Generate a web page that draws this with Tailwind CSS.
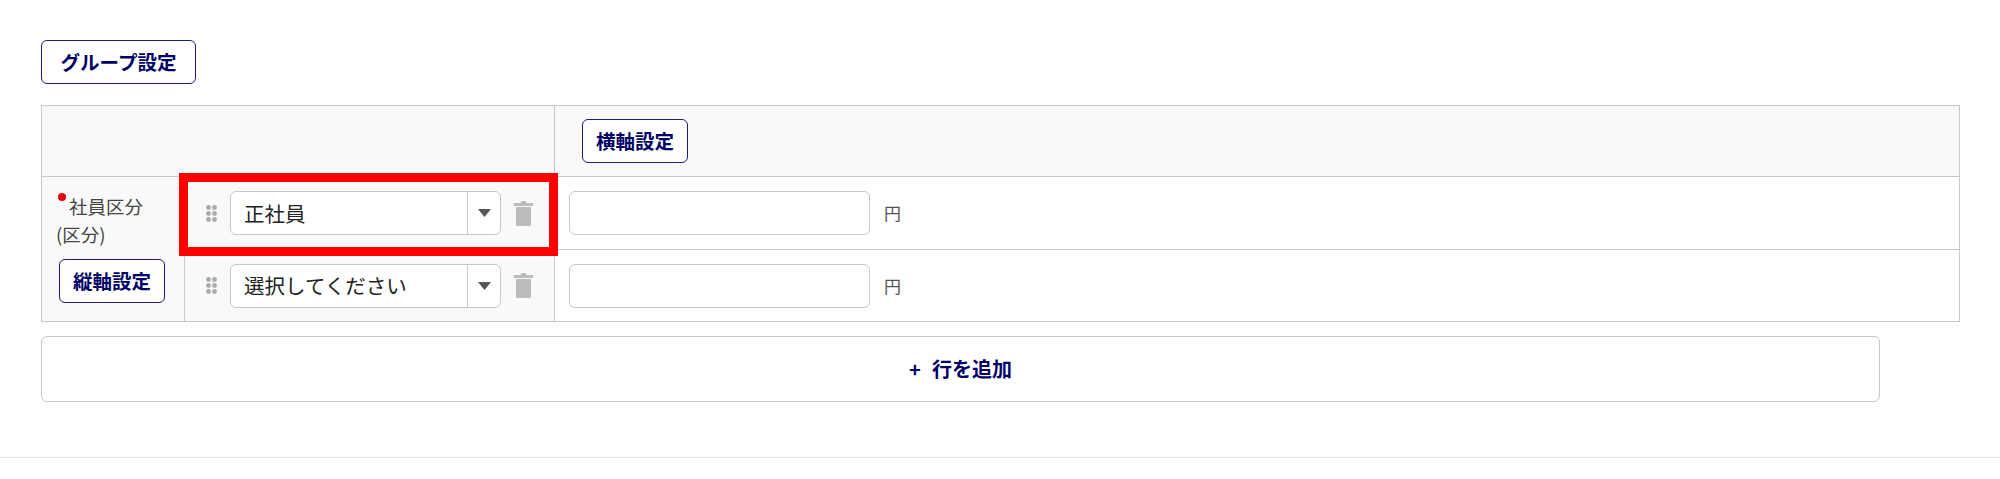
<!DOCTYPE html>
<html lang="ja">
<head>
    <meta charset="UTF-8">
    <title>グループ設定</title>
    <script src="https://cdn.jsdelivr.net/npm/@tailwindcss/browser@4"></script>
</head>
<body class="bg-white font-['Noto_Sans_CJK_JP','Liberation_Sans',sans-serif] text-[#333]">

<div class="relative h-[479px] overflow-hidden">
    <div class="pl-[41px] pt-[40px]">
        <button class="h-[44px] w-[155px] rounded-md border border-[#1c1c7c] bg-white text-[19.5px] font-bold leading-none text-[#000066]">グループ設定</button>

        <!-- Settings table -->
        <table class="mt-[21px] w-[1919px] table-fixed border-collapse">
            <colgroup>
                <col class="w-[143px]">
                <col class="w-[370px]">
                <col>
            </colgroup>
            <tr class="h-[71px] bg-[#f9f9f9]">
                <td colspan="2" class="border border-[#c8c8c8]"></td>
                <td class="border border-[#c8c8c8] pl-[27px]">
                    <button class="h-[44px] w-[106px] rounded-md border border-[#1c1c7c] bg-white text-[19.5px] font-bold leading-none text-[#000066]">横軸設定</button>
                </td>
            </tr>
            <tr class="h-[73px]">
                <td rowspan="2" class="border border-[#c8c8c8] bg-[#f9f9f9] px-[14px] align-top">
                    <div class="mt-[15px] text-[18.5px] leading-[28px] text-[#444]">
                        <span class="mb-[13px] ml-[2px] mr-[3px] inline-block size-[8px] rounded-full bg-[#e60012]"></span>社員区分<br>(区分)
                    </div>
                    <button class="ml-[3px] mt-[11px] block h-[44px] w-[106px] rounded-md border border-[#1c1c7c] bg-white text-[19.5px] font-bold leading-none text-[#000066]">縦軸設定</button>
                </td>
                <td class="border border-[#c8c8c8] bg-[#f9f9f9]">
                    <div class="flex items-center pl-[21px]">
                        <svg class="h-[17px] w-[11px]" viewBox="0 0 11 17" fill="#aaa"><circle cx="2.500" cy="2.500" r="2.400"/><circle cx="8.500" cy="2.500" r="2.400"/><circle cx="2.500" cy="8.500" r="2.400"/><circle cx="8.500" cy="8.500" r="2.400"/><circle cx="2.500" cy="14.500" r="2.400"/><circle cx="8.500" cy="14.500" r="2.400"/></svg>
                        <div class="ml-[13px] flex h-[44px] w-[271px] items-center rounded-md border border-[#c8c8c8] bg-white">
                            <span class="flex-1 pl-[13px] text-[20.5px] leading-none text-[#222]">正社員</span>
                            <span class="flex h-full w-[33px] items-center justify-center border-l border-[#c8c8c8]">
                                <svg class="h-[8px] w-[13px]" viewBox="0 0 13 8" fill="#555"><path d="M0 0h13L6.500 8z"/></svg>
                            </span>
                        </div>
                        <svg class="ml-[13px] h-[25px] w-[19px]" viewBox="0 0 19 25" fill="#bbb"><path d="M0 2h6.500L7.500 0h4l1 2H19v3H0z"/><path d="M2 6h15v17.500a1.500 1.500 0 0 1-1.500 1.500h-12A1.500 1.500 0 0 1 2 23.500z"/></svg>
                    </div>
                </td>
                <td class="border border-[#c8c8c8]">
                    <div class="flex items-center pl-[14px]">
                        <input type="text" class="h-[44px] w-[301px] rounded-md border border-[#c8c8c8] bg-white">
                        <span class="ml-[14px] text-[17px] text-[#555]">円</span>
                    </div>
                </td>
            </tr>
            <tr class="h-[72px]">
                <td class="border border-[#c8c8c8] bg-[#f9f9f9]">
                    <div class="flex items-center pl-[21px]">
                        <svg class="h-[17px] w-[11px]" viewBox="0 0 11 17" fill="#aaa"><circle cx="2.500" cy="2.500" r="2.400"/><circle cx="8.500" cy="2.500" r="2.400"/><circle cx="2.500" cy="8.500" r="2.400"/><circle cx="8.500" cy="8.500" r="2.400"/><circle cx="2.500" cy="14.500" r="2.400"/><circle cx="8.500" cy="14.500" r="2.400"/></svg>
                        <div class="ml-[13px] flex h-[44px] w-[271px] items-center rounded-md border border-[#c8c8c8] bg-white">
                            <span class="flex-1 pl-[13px] text-[20.5px] leading-none text-[#222]">選択してください</span>
                            <span class="flex h-full w-[33px] items-center justify-center border-l border-[#c8c8c8]">
                                <svg class="h-[8px] w-[13px]" viewBox="0 0 13 8" fill="#555"><path d="M0 0h13L6.500 8z"/></svg>
                            </span>
                        </div>
                        <svg class="ml-[13px] h-[25px] w-[19px]" viewBox="0 0 19 25" fill="#bbb"><path d="M0 2h6.500L7.500 0h4l1 2H19v3H0z"/><path d="M2 6h15v17.500a1.500 1.500 0 0 1-1.500 1.500h-12A1.500 1.500 0 0 1 2 23.500z"/></svg>
                    </div>
                </td>
                <td class="border border-[#c8c8c8]">
                    <div class="flex items-center pl-[14px]">
                        <input type="text" class="h-[44px] w-[301px] rounded-md border border-[#c8c8c8] bg-white">
                        <span class="ml-[14px] text-[17px] text-[#555]">円</span>
                    </div>
                </td>
            </tr>
        </table>

        <button class="mt-[14px] flex h-[66px] w-[1839px] items-center justify-center gap-[11px] rounded-md border border-[#c8c8c8] bg-white text-[20px] font-bold leading-none text-[#000066]"><span>+</span><span>行を追加</span></button>
    </div>

    <div class="mt-[55px] border-t border-[#e5e5e5]"></div>

    <!-- Red annotation box -->
    <div class="absolute left-[179px] top-[173px] h-[83px] w-[379px] border-[9px] border-[#ff0000]"></div>
</div>

</body>
</html>
